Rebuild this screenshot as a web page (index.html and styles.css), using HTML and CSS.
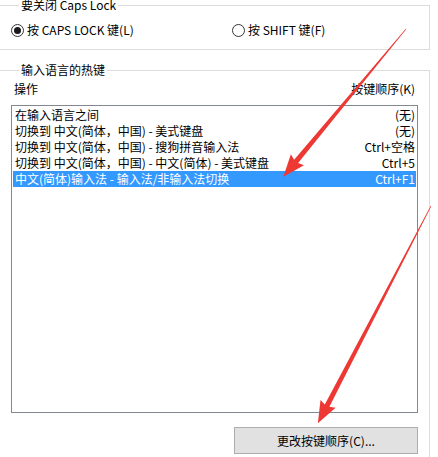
FILE: index.html
```html
<!DOCTYPE HTML><html>
<head>
	<meta name="viewport" charset="UTF-8" content="width=device-width, initial-scale=1">
	<title>文本服务和输入语言</title>
	<link rel="stylesheet" href="styles.css">
</head>
<body>
	<fieldset class="group caps">
		<legend>要关闭 Caps Lock</legend>
		<div class="radios">
			<label class="radio"><span class="dot on"></span>按 CAPS LOCK 键(L)</label>
			<label class="radio"><span class="dot"></span>按 SHIFT 键(F)</label>
		</div>
	</fieldset>

	<fieldset class="group keys">
		<legend>输入语言的热键</legend>
		<div class="heads"><span class="op">操作</span><span>按键顺序(K)</span></div>
		<div class="list">
			<div class="row"><span>在输入语言之间</span><span>(无)</span></div>
			<div class="row"><span>切换到 中文(简体，中国) - 美式键盘</span><span>(无)</span></div>
			<div class="row"><span>切换到 中文(简体，中国) - 搜狗拼音输入法</span><span>Ctrl+空格</span></div>
			<div class="row"><span>切换到 中文(简体，中国) - 中文(简体) - 美式键盘</span><span>Ctrl+5</span></div>
			<div class="row selected"><span>中文(简体)输入法 - 输入法/非输入法切换</span><span>Ctrl+F1</span></div>
		</div>
		<div class="actions"><button class="btn">更改按键顺序(C)...</button></div>
	</fieldset>

	<!-- red arrows drawn over the dialog -->
	<svg class="arrows" width="438" height="457" viewBox="0 0 438 457">
		<polygon transform="translate(406,29) rotate(129.7)" points="0,-0.3 172,-2.6 170,-8.5 192,0 170,8.5 172,2.6 0,0.3"/>
		<polygon transform="translate(431,206) rotate(117.5)" points="0,-0.3 225,-2.6 223,-8.5 245,0 223,8.5 225,2.6 0,0.3"/>
	</svg>
</body>
</html>
```
FILE: styles.css
```css
html {
	overflow: hidden;
}
body {
	position: relative;
	margin: 0;
	width: 438px;
	height: 457px;
	background-color: #ffffff;
	color: #000000;
	font-family: "Noto Sans CJK SC", "Noto Sans", sans-serif;
	font-size: 12px;
}
.group {
	margin: 0 0 0 -10px;
	width: 440px;
	box-sizing: border-box;
	border: 1px solid #dcdcdc;
	padding: 0 11px 0 20px;
	min-inline-size: 0;
}
.group legend {
	margin-left: 8px;
	padding: 0 2px;
	line-height: 12px;
}
.caps {
	margin-top: -1px;
	padding-top: 11px;
	padding-bottom: 11px;
}
.radios {
	display: grid;
	grid-template-columns: 221px 1fr;
	line-height: 16px;
}
.radio {
	display: flex;
	align-items: center;
	gap: 3px;
}
.dot {
	width: 11px;
	height: 11px;
	border: 1px solid #333333;
	border-radius: 50%;
	display: flex;
	align-items: center;
	justify-content: center;
}
.dot.on::after {
	content: "";
	width: 7px;
	height: 7px;
	border-radius: 50%;
	background-color: #1a1a1a;
}
.keys {
	margin-top: 14px;
	padding-top: 5px;
	padding-bottom: 12px;
}
.heads {
	display: flex;
	justify-content: space-between;
	line-height: 16px;
	padding-right: 3px;
}
.heads .op {padding-left: 3px;}
.list {
	margin-top: 8px;
	height: 308px;
	box-sizing: border-box;
	border: 1px solid #828790;
	padding: 1px;
}
.row {
	display: flex;
	justify-content: space-between;
	height: 16px;
	line-height: 16px;
	padding: 0 1px 0 2px;
	white-space: nowrap;
}
.row.selected {
	background-color: #3399ff;
	color: #ffffff;
}
.actions {
	display: flex;
	justify-content: flex-end;
	margin-top: 14px;
}
.btn {
	width: 184px;
	height: 27px;
	border: 1px solid #adadad;
	background-color: #e1e1e1;
	font-family: inherit;
	font-size: 12px;
	color: #000000;
	padding: 0;
}
.arrows {
	position: absolute;
	left: 0;
	top: 0;
	fill: #ee3833;
	pointer-events: none;
}
```
